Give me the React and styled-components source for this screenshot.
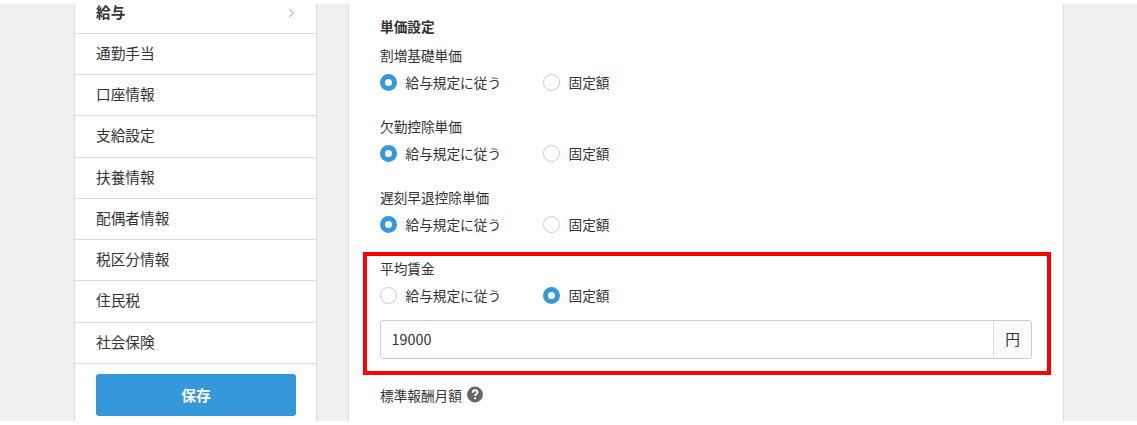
import React, { useState } from "react";
import styled, { createGlobalStyle } from "styled-components";

const GlobalStyle = createGlobalStyle`
  * {
    box-sizing: border-box;
  }

  body {
    margin: 0;
    background-color: #fff;
    color: #333;
    font-family: "Noto Sans CJK JP", sans-serif;
    overflow: hidden;
  }
`;

const menuItems = [
  "給与",
  "通勤手当",
  "口座情報",
  "支給設定",
  "扶養情報",
  "配偶者情報",
  "税区分情報",
  "住民税",
  "社会保険",
];

const unitPrices = [
  { key: "premium", label: "割増基礎単価" },
  { key: "absence", label: "欠勤控除単価" },
  { key: "late", label: "遅刻早退控除単価" },
];

const Page = styled.div`
  display: flex;
  gap: 31px;
  height: 417px;
  margin: 4px 0;
  padding: 0 73px 0 74px;
  background-color: #f0f0f0;
  overflow: hidden;
`;

const Sidebar = styled.nav`
  width: 243px;
  flex: none;
  background-color: #fff;
  border: solid #dcdcdc;
  border-width: 0 1px;
`;

const MenuList = styled.ul`
  list-style: none;
  margin: 0;
  padding: 0;
`;

const MenuItem = styled.li`
  display: flex;
  align-items: center;
  justify-content: space-between;
  height: 41.25px;
  padding: 0 21px 2px;
  border-bottom: 1px solid #dcdcdc;
  font-size: 14.67px;
  line-height: 20px;
  font-weight: ${(props) => (props.$active ? 700 : 400)};
  cursor: pointer;

  &:first-child {
    height: 29.75px;
    padding-bottom: 13px;
  }
`;

const SaveButton = styled.button`
  display: block;
  width: 200px;
  height: 42px;
  margin: 10.5px 0 0 21px;
  padding: 0 0 2px;
  border: none;
  border-radius: 3px;
  background-color: #3498db;
  color: #fff;
  font-family: inherit;
  font-size: 14.67px;
  font-weight: 700;
  cursor: pointer;
`;

const Content = styled.main`
  flex: 1;
  padding: 12px 31px 0;
  background-color: #fff;
  border: solid #dcdcdc;
  border-width: 0 1px;
`;

const SectionTitle = styled.h2`
  margin: 0 0 9px;
  font-size: 13.67px;
  line-height: 20px;
  font-weight: 700;
`;

const Field = styled.div`
  position: relative;
  height: 71.1px;
`;

const Label = styled.div`
  display: flex;
  align-items: center;
  gap: 5.5px;
  height: 20px;
  font-size: 13.67px;
  line-height: 20px;
`;

const RadioGroup = styled.div`
  display: flex;
  margin-top: 7px;
`;

const RadioLabel = styled.label`
  display: flex;
  align-items: center;
  gap: 8.5px;
  width: 163px;
  height: 20px;
  font-size: 13.67px;
  line-height: 20px;
  cursor: pointer;
`;

const Radio = styled.input`
  appearance: none;
  flex: none;
  width: 17px;
  height: 17px;
  margin: 0;
  border: 1px solid #ccc;
  border-radius: 50%;
  background-color: #fff;

  &:checked {
    border: 5.5px solid #3498db;
  }
`;

const AverageField = styled(Field)`
  height: 127px;
`;

// Red frame around the average wage field
const Highlight = styled.div`
  position: absolute;
  top: -6.3px;
  left: -17px;
  right: -19px;
  height: 123px;
  border: 4px solid #f00;
  pointer-events: none;
`;

const AmountGroup = styled.div`
  display: flex;
  height: 39px;
  margin-top: 14.7px;
  border: 1px solid #ccc;
  border-radius: 3px;
  overflow: hidden;
`;

const AmountInput = styled.input`
  flex: 1;
  min-width: 0;
  padding: 0 10.5px 2px;
  border: none;
  outline: none;
  background-color: #fff;
  color: #333;
  font-family: inherit;
  font-size: 14.4px;
`;

const Unit = styled.span`
  display: flex;
  align-items: center;
  justify-content: center;
  width: 38px;
  padding-bottom: 2px;
  border-left: 1px solid #dcdcdc;
  background-color: #fafafa;
  font-size: 14.67px;
`;

const ChevronIcon = () => (
  <svg width="7" height="12" viewBox="0 0 7 12" fill="none">
    <path d="M1.2 3L5.4 7L1.2 11" stroke="#c4c4c4" strokeWidth="1.3" />
  </svg>
);

const HelpIcon = () => (
  <svg width="16" height="18" viewBox="0 0 16 18">
    <circle cx="8" cy="8.5" r="7.9" fill="#666" />
    <path
      d="M5.7 6.7C5.7 5.2 6.7 4.3 8.1 4.3C9.5 4.3 10.5 5.1 10.5 6.3C10.5 7.9 8.1 8 8.1 10"
      fill="none"
      stroke="#fff"
      strokeWidth="1.9"
    />
    <circle cx="8.1" cy="12.3" r="1.15" fill="#fff" />
  </svg>
);

const RateOptions = ({ name, value, onChange }) => (
  <RadioGroup>
    <RadioLabel>
      <Radio
        type="radio"
        name={name}
        checked={value === "rule"}
        onChange={() => onChange(name, "rule")}
      />
      給与規定に従う
    </RadioLabel>
    <RadioLabel>
      <Radio
        type="radio"
        name={name}
        checked={value === "fixed"}
        onChange={() => onChange(name, "fixed")}
      />
      固定額
    </RadioLabel>
  </RadioGroup>
);

const App = () => {
  const [activeItem, setActiveItem] = useState("給与");
  const [amount, setAmount] = useState("19000");
  const [rates, setRates] = useState({
    premium: "rule",
    absence: "rule",
    late: "rule",
    average: "fixed",
  });

  const handleRateChange = (name, value) => {
    setRates({ ...rates, [name]: value });
  };

  return (
    <>
      <GlobalStyle />
      <Page>
        <Sidebar>
          <MenuList>
            {menuItems.map((item) => (
              <MenuItem
                key={item}
                $active={item === activeItem}
                onClick={() => setActiveItem(item)}
              >
                {item}
                {item === activeItem && <ChevronIcon />}
              </MenuItem>
            ))}
          </MenuList>
          <SaveButton type="button">保存</SaveButton>
        </Sidebar>

        <Content>
          <SectionTitle>単価設定</SectionTitle>
          {unitPrices.map(({ key, label }) => (
            <Field key={key}>
              <Label>{label}</Label>
              <RateOptions name={key} value={rates[key]} onChange={handleRateChange} />
            </Field>
          ))}

          <AverageField>
            <Label>平均賃金</Label>
            <RateOptions name="average" value={rates.average} onChange={handleRateChange} />
            {rates.average === "fixed" && (
              <AmountGroup>
                <AmountInput value={amount} onChange={(e) => setAmount(e.target.value)} />
                <Unit>円</Unit>
              </AmountGroup>
            )}
            <Highlight />
          </AverageField>

          <Label>
            標準報酬月額
            <HelpIcon />
          </Label>
        </Content>
      </Page>
    </>
  );
};

export default App;
